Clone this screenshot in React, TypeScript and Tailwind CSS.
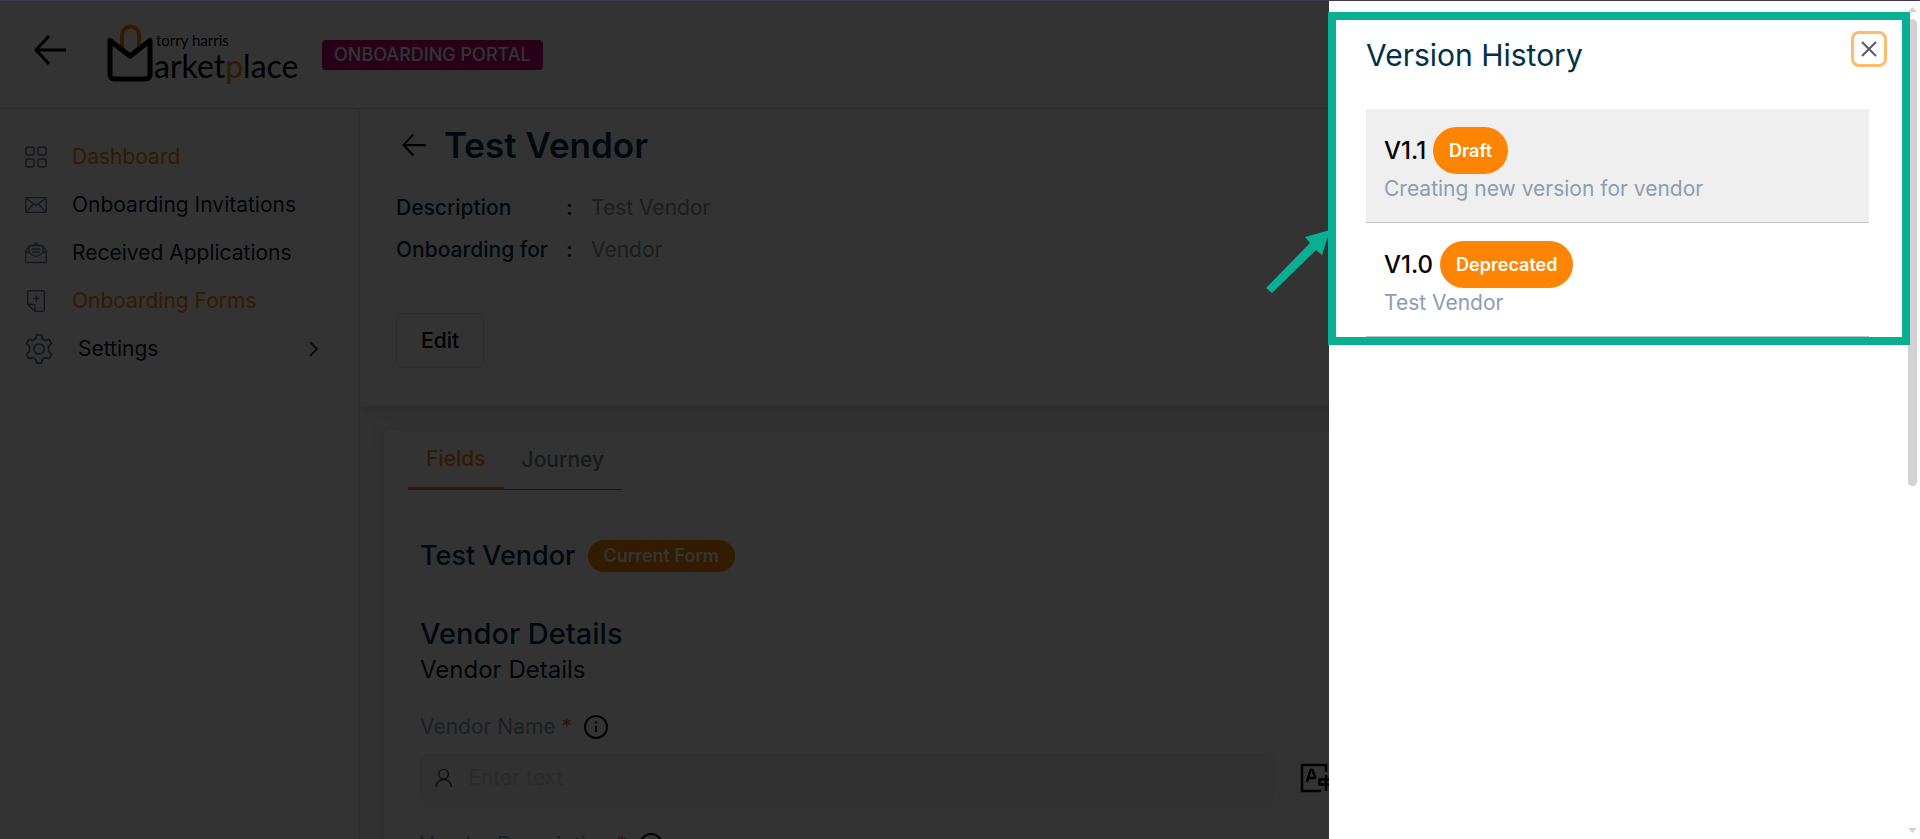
import React from 'react'

type Version = {
  name: string,
  status: string,
  description: string,
  selected?: boolean,
}

const versions: Version[] = [
  { name: 'V1.1', status: 'Draft', description: 'Creating new version for vendor', selected: true },
  { name: 'V1.0', status: 'Deprecated', description: 'Test Vendor' },
]

type ArrowProps = { size: number, stroke: number, className?: string }

const BackArrow = ({ size, stroke, className }: ArrowProps) => (
  <svg width={size} height={size} viewBox="0 0 32 32" fill="none" stroke="currentColor" strokeWidth={stroke} className={className}>
    <path d="M32 16H2M15 2L2 16l13 14" />
  </svg>
)

const Logo = () => (
  <svg width="192" height="64" viewBox="0 0 192 64" role="img" aria-label="torry harris Marketplace">
    <path d="M15 28V13a8.500 8.500 0 0 1 17 0v15" fill="none" stroke="#f98500" strokeWidth="4" />
    <path d="M3 18.500L23 34l20-15.500V53a4 4 0 0 1-4 4H7a4 4 0 0 1-4-4z" fill="none" stroke="#000" strokeWidth="5" strokeLinejoin="round" />
    <path d="M2 16v10l4-2 17 13 17-13 4 2V16L23 31z" fill="#000" />
    <text x="49" y="24" fontFamily="Lato, sans-serif" fontSize="15" fill="#000">torry harris</text>
    <text x="47" y="56" fontFamily="Lato, sans-serif" fontSize="32" fill="#000">
      arket<tspan fill="#f98500">p</tspan>lace
    </text>
  </svg>
)

const DashboardIcon = () => (
  <svg width="22" height="22" viewBox="0 0 22 22" fill="none" stroke="currentColor" strokeWidth="1.500">
    <rect x="1" y="1" width="8" height="8" rx="2" />
    <rect x="13" y="1" width="8" height="8" rx="2" />
    <rect x="1" y="13" width="8" height="8" rx="2" />
    <rect x="13" y="13" width="8" height="8" rx="2" />
  </svg>
)

const MailIcon = () => (
  <svg width="22" height="22" viewBox="0 0 22 22" fill="none" stroke="currentColor" strokeWidth="1.300">
    <rect x="0.700" y="3.700" width="20.600" height="14.600" rx="1" />
    <path d="M1 4l10 7.500L21 4M1 18l7.500-8M21 18l-7.500-8" />
  </svg>
)

const OpenMailIcon = () => (
  <svg width="22" height="22" viewBox="0 0 22 22" fill="none" stroke="currentColor" strokeWidth="1.300">
    <path d="M4 5L1.500 7.500Q.7 8.300.7 9v10.500q0 1 1 1h18.600q1 0 1-1V9q0-.7-.8-1.500L18 5" />
    <path d="M1 9.500l10 5 10-5M4 11V4.500q0-1 1-1h12q1 0 1 1V11M8 3.500l3-2.500 3 2.500M7 7h8M7 10h8" />
  </svg>
)

const FormIcon = () => (
  <svg width="22" height="24" viewBox="0 0 22 24" fill="none" stroke="currentColor" strokeWidth="1.400">
    <path d="M2.700 15.500V3q0-1.300 1.300-1.300h14q1.300 0 1.300 1.300v18q0 1.300-1.300 1.300H10zM2.700 15.500H9q1 0 1 1v5.800M11.300 6.500v6M8.300 9.500h6" />
  </svg>
)

const GearIcon = () => (
  <svg width="28" height="30" viewBox="0 0 28 30" fill="none" stroke="currentColor" strokeWidth="1.800" strokeLinejoin="round">
    <circle cx="14" cy="15" r="5.200" />
    <path d="M11.500 1h5l.8 3.800 3 1.700 3.700-1.200 2.500 4.300-2.900 2.700v5.400l2.900 2.700-2.500 4.300-3.700-1.200-3 1.700-.8 3.800h-5l-.8-3.800-3-1.700L4 24.700l-2.500-4.300 2.900-2.700v-5.400L1.500 9.600 4 5.300l3.700 1.200 3-1.700z" />
  </svg>
)

const InfoIcon = () => (
  <svg width="24" height="24" viewBox="0 0 24 24" fill="none" stroke="currentColor" strokeWidth="2">
    <circle cx="12" cy="12" r="11" />
    <path d="M12 11v6M12 6.500v2" />
  </svg>
)

const UserIcon = () => (
  <svg width="18" height="20" viewBox="0 0 18 20" fill="none" stroke="currentColor" strokeWidth="1.500">
    <circle cx="9" cy="6" r="5" />
    <path d="M1 19.500c0-5 3.500-8 8-8s8 3 8 8" />
  </svg>
)

const TranslateIcon = () => (
  <svg width="34" height="30" viewBox="0 0 34 30" fill="none" stroke="currentColor" strokeWidth="2.500">
    <path d="M26 9V2H2v26h19" />
    <path d="M7 19l3.500-12h2l3 8M8.500 15H16" />
    <path d="M26 12v16M19.500 16.500h13v5h-13z" />
  </svg>
)

const menu = [
  { label: 'Dashboard', icon: <DashboardIcon />, active: true },
  { label: 'Onboarding Invitations', icon: <MailIcon />, active: false },
  { label: 'Received Applications', icon: <OpenMailIcon />, active: false },
  { label: 'Onboarding Forms', icon: <FormIcon />, active: true },
]

const Header = () => (
  <header className="flex h-[109px] shrink-0 items-center border-b border-[#e0e0e0] bg-white pb-2 pl-[34px]">
    <button type="button" aria-label="Back" className="mr-[41px] text-black">
      <BackArrow size={32} stroke={3} />
    </button>
    <a href="#" className="mt-2 mr-[23px]"><Logo /></a>
    <span className="mt-2.5 rounded-sm bg-[#c0007a] px-3 text-lg leading-[30px] font-medium text-white">ONBOARDING PORTAL</span>
  </header>
)

const Sidebar = () => (
  <nav className="w-[360px] shrink-0 border-r border-[#e6e6e6] bg-white pt-6 pl-[25px] text-[21px]">
    {menu.map((item) => (
      <a key={item.label} href="#" className={`flex h-12 items-center gap-[25px] ${item.active ? 'text-[#fb8500]' : 'text-[#0f172a]'}`}>
        <span className="text-[#64748b]">{item.icon}</span>
        {item.label}
      </a>
    ))}
    <button type="button" className="flex h-12 w-full items-center text-[#0f172a]">
      <span className="text-[#64748b]"><GearIcon /></span>
      <span className="ml-[25px]">Settings</span>
      <svg width="10" height="16" viewBox="0 0 10 16" fill="none" stroke="#334155" strokeWidth="2" className="mr-10 ml-auto">
        <path d="M1 1l7 7-7 7" />
      </svg>
    </button>
  </nav>
)

const FieldLabel = ({ id, text }: { id: string, text: string }) => (
  <div className="flex h-[30px] items-center text-[21px] text-[#8d9daf]">
    <label htmlFor={id}>{text} <span className="text-[#e24c4c]">*</span></label>
    <button type="button" aria-label={`About ${text}`} className="ml-3 text-[#0b0b1c]"><InfoIcon /></button>
  </div>
)

const VendorForm = () => (
  <main className="min-w-0 flex-1 overflow-hidden bg-[#f8f8f8]">
    <section className="bg-white px-9 pt-4 pb-[38px] shadow-lg">
      <div className="flex h-10 items-center gap-[18px]">
        <button type="button" aria-label="Back" className="ml-1.5 text-[#0b0b1c]"><BackArrow size={24} stroke={3} /></button>
        <h1 className="text-[35px] font-semibold text-[#023047]">Test Vendor</h1>
      </div>
      <dl className="mt-[22px] grid grid-cols-[170px_25px_1fr] text-[21px] leading-[42px]">
        <dt className="font-medium text-[#023047]">Description</dt>
        <dd className="font-semibold text-[#023047]">:</dd>
        <dd className="text-[#8d8f97]">Test Vendor</dd>
        <dt className="font-medium text-[#023047]">Onboarding for</dt>
        <dd className="font-semibold text-[#023047]">:</dd>
        <dd className="text-[#8d8f97]">Vendor</dd>
      </dl>
      <button type="button" className="mt-[42px] h-[55px] rounded-lg border border-[#dfdfdf] px-6 text-[21px] font-medium text-black">Edit</button>
    </section>

    <section className="mx-6 mt-6 rounded-lg bg-white pb-9 shadow-[0_0_20px_rgba(0,0,0,0.12)]">
      <div role="tablist" className="flex h-[60px] pl-6 text-[21px] font-medium">
        <button type="button" role="tab" aria-selected="true" className="border-b-3 border-[#fb8500] px-[18px] text-[#fb8500]">Fields</button>
        <button type="button" role="tab" aria-selected="false" className="border-b border-[#6c757d] px-[18px] text-[#75818f]">Journey</button>
      </div>
      <div className="px-9">
        <div className="mt-[50px] flex h-8 items-center gap-3">
          <h2 className="text-[27px] font-medium text-[#023047]">Test Vendor</h2>
          <span className="rounded-full bg-[#fb8500] px-4 text-lg leading-8 font-semibold text-white">Current Form</span>
        </div>
        <h3 className="mt-11 text-[29px] leading-9 font-medium text-[#023047]">Vendor Details</h3>
        <p className="mb-6 text-2xl leading-9 text-[#0f172a]">Vendor Details</p>
        <FieldLabel id="vendor-name" text="Vendor Name" />
        <div className="mt-3 mb-7 flex items-center gap-[25px]">
          <div className="flex h-12 w-3/5 max-w-[855px] items-center rounded-lg border border-[#ececec] bg-[#f4f4f4] px-3.5 text-[#3d4250]">
            <UserIcon />
            <input id="vendor-name" type="text" placeholder="Enter text" className="ml-4 w-full bg-transparent text-[21px] outline-none placeholder:text-[#cfcfcf]" />
          </div>
          <button type="button" aria-label="Translate" className="text-[#0b0b1c]"><TranslateIcon /></button>
        </div>
        <FieldLabel id="vendor-description" text="Vendor Description" />
        <input id="vendor-description" type="text" className="mt-3 h-12 w-3/5 rounded-lg border border-[#ececec] bg-[#f4f4f4]" />
      </div>
    </section>
  </main>
)

const VersionHistory = () => (
  <aside role="dialog" aria-label="Version History" className="absolute inset-y-0 right-0 w-[591px] bg-white pr-[51px] pl-[37px]">
    <div className="flex h-[109px] items-start justify-between pt-[31px]">
      <h2 className="mt-1.5 text-3xl leading-9 text-[#023047]">Version History</h2>
      <button type="button" aria-label="Close" className="-mr-[18px] flex size-9 items-center justify-center rounded-lg border-3 border-[#ffbb6b]">
        <svg width="16" height="16" viewBox="0 0 16 16" fill="none" stroke="#555b6b" strokeWidth="2"><path d="M1 1l14 14M15 1L1 15" /></svg>
      </button>
    </div>
    <ul>
      {versions.map((v) => (
        <li key={v.name} className={`h-[114px] border-b border-[#c4c4c4] px-[18px] pt-[18px] ${v.selected ? 'bg-[#efefef]' : ''}`}>
          <div className="flex items-center gap-[7px]">
            <span className="text-2xl font-medium text-black">{v.name}</span>
            <span className="rounded-full bg-[#fd8503] px-4 text-lg leading-[47px] font-semibold text-white">{v.status}</span>
          </div>
          <p className="text-[21px] leading-[30px] text-[#8d9daf]">{v.description}</p>
        </li>
      ))}
    </ul>
    {/* scroll bar */}
    <div className="absolute inset-y-0 right-[3px] flex w-[9px] flex-col pt-[7px] pb-[6px]">
      <svg width="9" height="5" viewBox="0 0 9 5" fill="#d2d2d4"><path d="M0 5L4.500 0 9 5z" /></svg>
      <div className="mt-[7px] h-[467px] rounded-full bg-[#d2d2d4]" />
      <svg width="9" height="5" viewBox="0 0 9 5" fill="#d2d2d4" className="mt-auto"><path d="M0 0L4.500 5 9 0z" /></svg>
    </div>
  </aside>
)

const App = () => {
  return (
    <div className="relative flex h-screen flex-col overflow-hidden font-['Inter',sans-serif]">
      <Header />
      <div className="flex min-h-0 flex-1">
        <Sidebar />
        <VendorForm />
      </div>
      <div className="absolute inset-0 bg-black/80" />
      <VersionHistory />
      <div className="absolute inset-x-0 top-0 h-px bg-[#40364f]" />
      {/* callout box and arrow */}
      <div className="pointer-events-none absolute top-3 right-2.5 h-[333px] w-[582px] border-8 border-[#08af92]" />
      <svg width="66" height="66" viewBox="0 0 66 66" fill="#08af92" className="absolute top-[229px] right-[590px]">
        <path d="M2 59L46 14l-5-6L66 1l-8 25-6-5L8 64z" />
      </svg>
    </div>
  )
}

export default App
